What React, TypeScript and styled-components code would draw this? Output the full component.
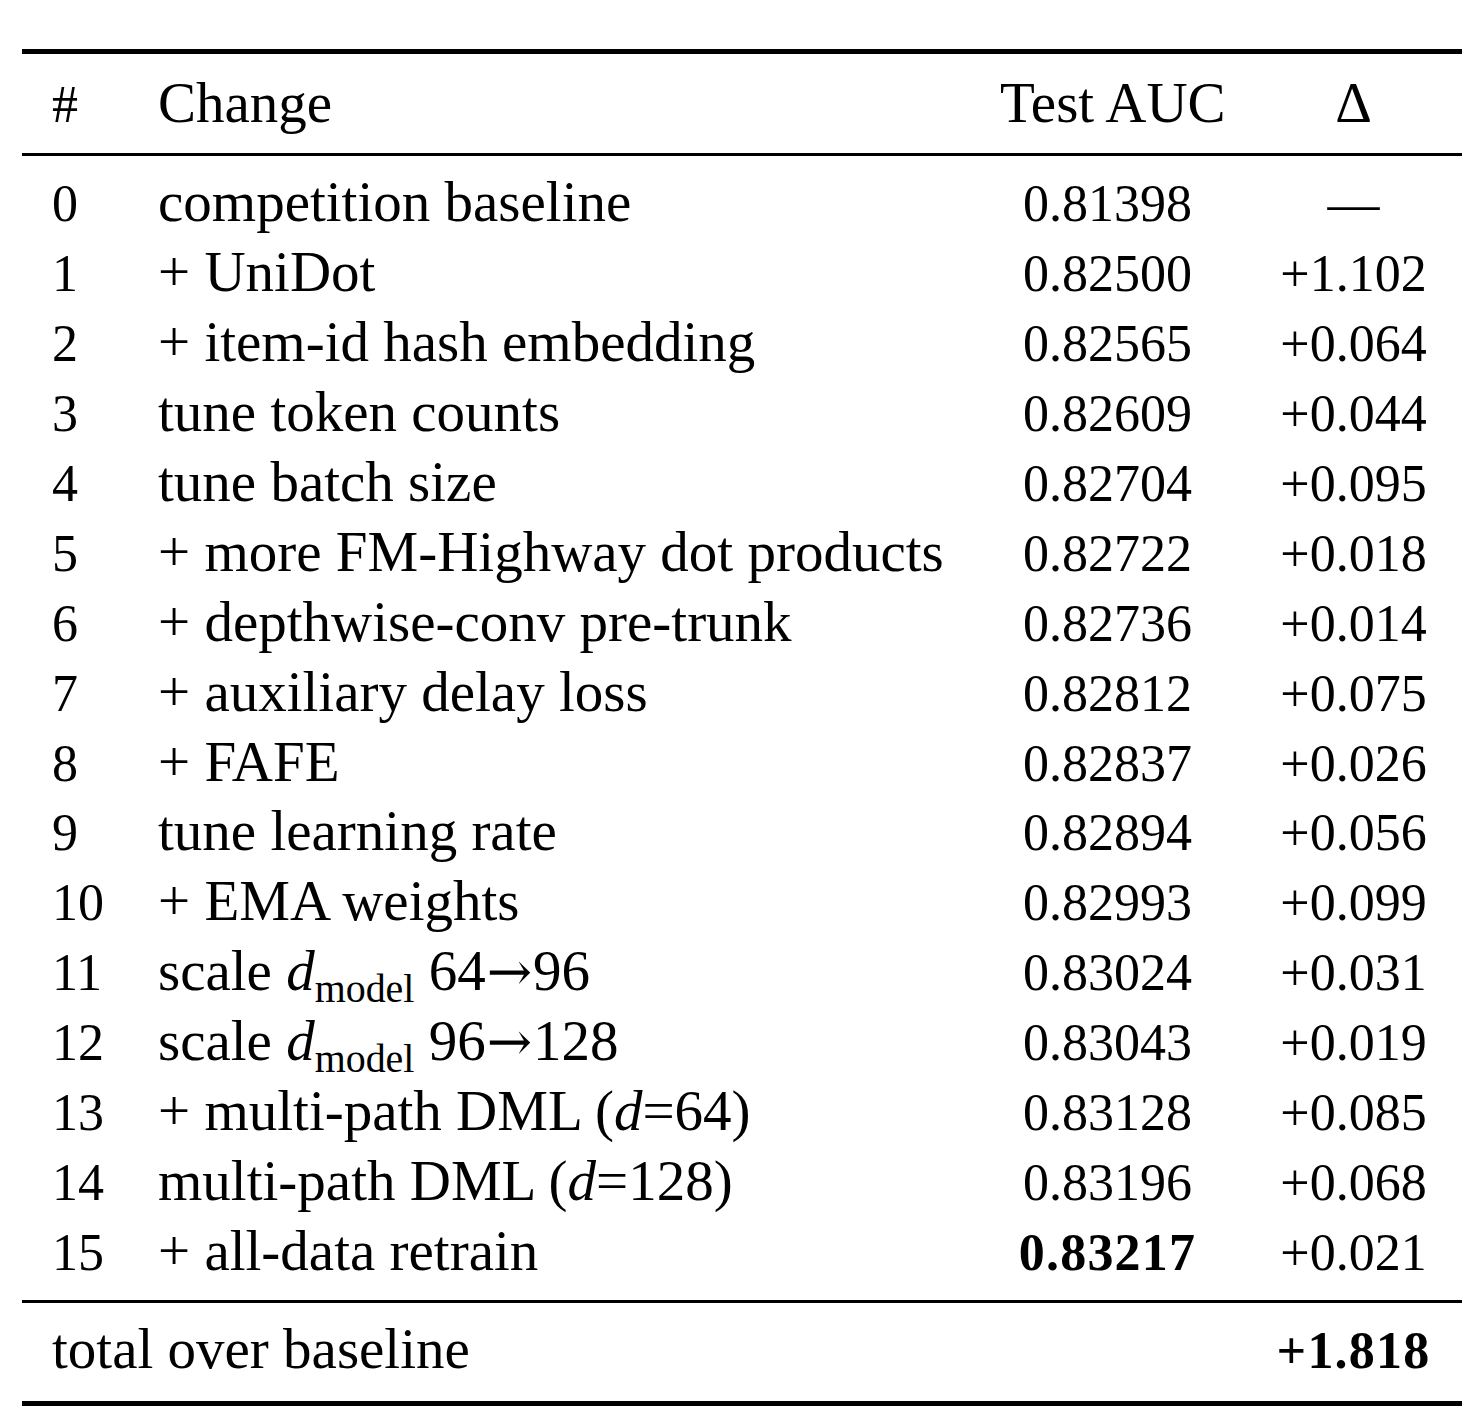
import React from "react";
import styled, { createGlobalStyle } from "styled-components";

const GlobalStyle = createGlobalStyle`
  html, body {
    margin: 0;
    padding: 0;
    background: #ffffff;
  }
  body {
    font-family: "Liberation Serif", "Times New Roman", serif;
    color: #000000;
  }
`;

const ROW = 69.9;

const Table = styled.table`
  margin: 49px 0 0 22px;
  width: 1440px;
  table-layout: fixed;
  border-collapse: separate;
  border-spacing: 0;
  border-top: 5px solid #000;
  border-bottom: 5px solid #000;
  font-size: 57px;
  line-height: ${ROW}px;
`;

type Align = "left" | "center";

const HeadCell = styled.th<{ $align?: Align }>`
  font-weight: normal;
  text-align: ${(p) => p.$align ?? "left"};
  vertical-align: baseline;
  white-space: nowrap;
  padding: 13.8px 30px 15.3px;
  border-bottom: 3px solid #000;
`;

const Cell = styled.td<{ $align?: Align; $first?: boolean; $last?: boolean }>`
  text-align: ${(p) => p.$align ?? "left"};
  vertical-align: baseline;
  white-space: nowrap;
  padding: ${(p) => (p.$first ? "11.3px" : "0")} 30px ${(p) => (p.$last ? "14.3px" : "0")};
`;

const TotalCell = styled.td<{ $align?: Align }>`
  text-align: ${(p) => p.$align ?? "left"};
  vertical-align: baseline;
  white-space: nowrap;
  padding: 10.8px 30px 17.3px;
  border-top: 3px solid #000;
`;

const Num = styled.span<{ $bold?: boolean }>`
  font-size: 52px;
  line-height: 1;
  font-weight: ${(p) => (p.$bold ? "bold" : "normal")};
  letter-spacing: ${(p) => (p.$bold ? "1.2px" : "0")};
`;

const Var = styled.i`
  font-style: italic;
`;

const Sub = styled.span`
  font-size: 0.7em;
  line-height: 0;
  position: relative;
  top: 0.3em;
`;

const Arrow = styled.span`
  font-family: "DejaVu Serif", serif;
  font-size: 0.95em;
  line-height: 0;
  margin: 0 1px;
`;

const DModel = () => (
  <>
    <Var>d</Var>
    <Sub>model</Sub>
  </>
);

type Row = { change: React.ReactNode; auc: string; delta: string; best?: boolean };

const rows: Row[] = [
  { change: "competition baseline", auc: "0.81398", delta: "—" },
  { change: "+ UniDot", auc: "0.82500", delta: "+1.102" },
  { change: "+ item-id hash embedding", auc: "0.82565", delta: "+0.064" },
  { change: "tune token counts", auc: "0.82609", delta: "+0.044" },
  { change: "tune batch size", auc: "0.82704", delta: "+0.095" },
  { change: "+ more FM-Highway dot products", auc: "0.82722", delta: "+0.018" },
  { change: "+ depthwise-conv pre-trunk", auc: "0.82736", delta: "+0.014" },
  { change: "+ auxiliary delay loss", auc: "0.82812", delta: "+0.075" },
  { change: "+ FAFE", auc: "0.82837", delta: "+0.026" },
  { change: "tune learning rate", auc: "0.82894", delta: "+0.056" },
  { change: "+ EMA weights", auc: "0.82993", delta: "+0.099" },
  {
    change: (
      <>
        scale <DModel /> 64<Arrow>→</Arrow>96
      </>
    ),
    auc: "0.83024",
    delta: "+0.031",
  },
  {
    change: (
      <>
        scale <DModel /> 96<Arrow>→</Arrow>128
      </>
    ),
    auc: "0.83043",
    delta: "+0.019",
  },
  {
    change: (
      <>
        + multi-path DML (<Var>d</Var>=64)
      </>
    ),
    auc: "0.83128",
    delta: "+0.085",
  },
  {
    change: (
      <>
        multi-path DML (<Var>d</Var>=128)
      </>
    ),
    auc: "0.83196",
    delta: "+0.068",
  },
  { change: "+ all-data retrain", auc: "0.83217", delta: "+0.021", best: true },
];

export default function App() {
  const last = rows.length - 1;
  return (
    <>
      <GlobalStyle />
      <Table>
        <colgroup>
          <col style={{ width: 106 }} />
          <col style={{ width: 842 }} />
          <col style={{ width: 275 }} />
          <col style={{ width: 217 }} />
        </colgroup>
        <thead>
          <tr>
            <HeadCell>
              <Num>#</Num>
            </HeadCell>
            <HeadCell>Change</HeadCell>
            <HeadCell $align="center">Test AUC</HeadCell>
            <HeadCell $align="center">Δ</HeadCell>
          </tr>
        </thead>
        <tbody>
          {rows.map((r, i) => (
            <tr key={i}>
              <Cell $first={i === 0} $last={i === last}>
                <Num>{i}</Num>
              </Cell>
              <Cell $first={i === 0} $last={i === last}>
                {r.change}
              </Cell>
              <Cell $align="center" $first={i === 0} $last={i === last}>
                <Num $bold={r.best}>{r.auc}</Num>
              </Cell>
              <Cell $align="center" $first={i === 0} $last={i === last}>
                <Num>{r.delta}</Num>
              </Cell>
            </tr>
          ))}
        </tbody>
        <tfoot>
          <tr>
            <TotalCell colSpan={3}>total over baseline</TotalCell>
            <TotalCell $align="center">
              <Num $bold>+1.818</Num>
            </TotalCell>
          </tr>
        </tfoot>
      </Table>
    </>
  );
}
